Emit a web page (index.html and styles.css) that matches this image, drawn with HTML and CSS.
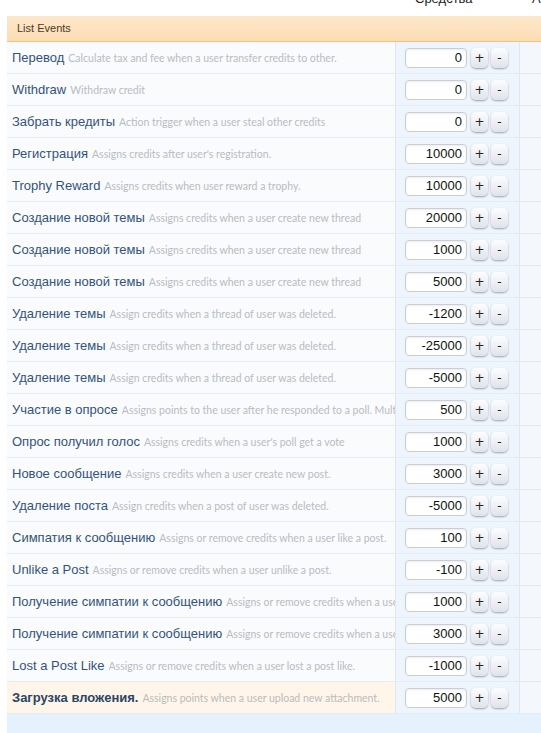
FILE: index.html
```html
<!DOCTYPE html>
<html lang="ru">
<head>
    <meta charset="UTF-8">
    <meta name="viewport" content="width=device-width, initial-scale=1.0">
    <title>List Events</title>
    <link rel="stylesheet" href="styles.css">
</head>
<body>

    <div class="head-row">
        <div class="head-cell head-main"></div>
        <div class="head-cell head-amount">Средства</div>
        <div class="head-cell head-last">А</div>
    </div>

    <div class="section-title">List Events</div>

    <div id="events" class="events"></div>

    <div class="events-foot"></div>

    <script>
        // список событий
        const events = [
            ['Перевод', 'Calculate tax and fee when a user transfer credits to other.', 0],
            ['Withdraw', 'Withdraw credit', 0],
            ['Забрать кредиты', 'Action trigger when a user steal other credits', 0],
            ['Регистрация', "Assigns credits after user's registration.", 10000],
            ['Trophy Reward', 'Assigns credits when user reward a trophy.', 10000],
            ['Создание новой темы', 'Assigns credits when a user create new thread', 20000],
            ['Создание новой темы', 'Assigns credits when a user create new thread', 1000],
            ['Создание новой темы', 'Assigns credits when a user create new thread', 5000],
            ['Удаление темы', 'Assign credits when a thread of user was deleted.', -1200],
            ['Удаление темы', 'Assign credits when a thread of user was deleted.', -25000],
            ['Удаление темы', 'Assign credits when a thread of user was deleted.', -5000],
            ['Участие в опросе', 'Assigns points to the user after he responded to a poll. Multiple votes', 500],
            ['Опрос получил голос', "Assigns credits when a user's poll get a vote", 1000],
            ['Новое сообщение', 'Assigns credits when a user create new post.', 3000],
            ['Удаление поста', 'Assign credits when a post of user was deleted.', -5000],
            ['Симпатия к сообщению', 'Assigns or remove credits when a user like a post.', 100],
            ['Unlike a Post', 'Assigns or remove credits when a user unlike a post.', -100],
            ['Получение симпатии к сообщению', 'Assigns or remove credits when a user receive a like.', 1000],
            ['Получение симпатии к сообщению', 'Assigns or remove credits when a user receive a like.', 3000],
            ['Lost a Post Like', 'Assigns or remove credits when a user lost a post like.', -1000],
            ['Загрузка вложения.', 'Assigns points when a user upload new attachment.', 5000]
        ];

        const list = document.getElementById('events');
        list.innerHTML = events.map((ev, i) => {
            const active = i === events.length - 1 ? ' active' : '';
            return `<div class="event-row${active}">
                        <div class="event-info"><span class="event-title">${ev[0]}</span><span class="event-desc">${ev[1]}</span></div>
                        <div class="event-amount">
                            <input type="text" class="amount-input" value="${ev[2]}">
                            <button class="step-button">+</button>
                            <button class="step-button">-</button>
                        </div>
                        <div class="event-extra"></div>
                    </div>`;
        }).join('');
    </script>

</body>
</html>
```

FILE: styles.css
```css
/* базовые стили */
body {
    margin: 0;
    padding: 0;
    background-color: #fff;
    font-family: 'Liberation Sans', Arial, sans-serif;
}

.head-row {
    display: grid;
    grid-template-columns: 395px 125px 21px;
    height: 16px;
    overflow: hidden;
}

.head-cell {
    font-size: 13px;
    line-height: 13px;
    margin-top: -8px;
    color: #222;
}

.head-amount {
    padding-left: 20px;
}

.head-last {
    padding-left: 12px;
}

.section-title {
    margin-left: 7px;
    height: 25px;
    line-height: 25px;
    padding-left: 10px;
    font-size: 11px;
    color: #4b3a28;
    background: linear-gradient(to bottom, #fde8cb, #fbdcb2);
    border-bottom: 1px solid #f4c27e;
}

.events {
    margin-left: 7px;
}

.event-row {
    display: grid;
    grid-template-columns: 388px 125px 21px;
    height: 31px;
    border-bottom: 1px solid #e3ebf4;
}

.event-info {
    display: flex;
    align-items: center;
    gap: 4px;
    padding-left: 5px;
    background-color: #fafbfd;
    white-space: nowrap;
    overflow: hidden;
}

.event-title {
    flex-shrink: 0;
    font-size: 13px;
    color: #33537a;
}

.event-desc {
    min-width: 0;
    overflow: hidden;
    font-family: 'Liberation Sans Narrow', 'Lato', sans-serif;
    font-size: 10.5px;
    color: #b7bcc3;
}

.event-row.active .event-info {
    background-color: #fff5e8;
}

.event-row.active .event-title {
    font-weight: bold;
    color: #2a4567;
}

.event-amount {
    display: flex;
    align-items: center;
    padding-left: 9px;
    background-color: #eef5fc;
    border-left: 1px solid #dce7f2;
    border-right: 1px solid #dce7f2;
}

.event-extra {
    background-color: #f4f8fd;
}

.amount-input {
    box-sizing: border-box;
    width: 62px;
    height: 20px;
    padding: 0 4px 0 0;
    margin: 0 4px 0 0;
    border: 1px solid #c9ced6;
    border-radius: 4px;
    background-color: #fff;
    box-shadow: inset 0 1px 2px rgba(0, 0, 0, 0.08);
    text-align: right;
    font-family: 'Liberation Sans', sans-serif;
    font-size: 13px;
    color: #111;
}

.step-button {
    width: 17px;
    height: 20px;
    padding: 0;
    margin-right: 3px;
    border: none;
    border-radius: 5px;
    background: linear-gradient(to bottom, #fdfdfe, #dfe3ea);
    box-shadow: 0 1px 2px rgba(0, 0, 0, 0.35);
    font-family: 'DejaVu Sans', sans-serif;
    font-size: 12px;
    color: #222;
    cursor: pointer;
}

.events-foot {
    margin-left: 7px;
    height: 40px;
    background-color: #e5f1fc;
}
```
